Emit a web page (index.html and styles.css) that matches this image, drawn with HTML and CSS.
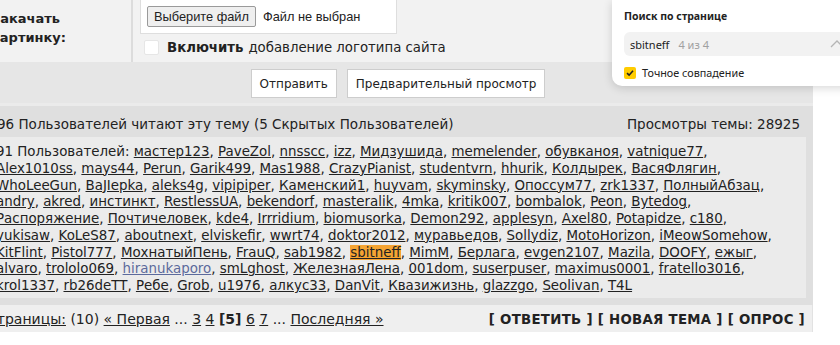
FILE: index.html
```html
<!DOCTYPE html>
<html lang="ru">
<head>
    <meta charset="UTF-8">
    <title>Тема форума</title>
    <link rel="stylesheet" href="styles.css">
</head>
<body>
    <div class="page">
        <div class="upload-row">
            <div class="upload-label">Закачать<br>картинку:</div>
            <div class="upload-field">
                <div class="file-box">
                    <span class="file-btn">Выберите файл</span>
                    <span class="file-name">Файл не выбран</span>
                </div>
                <div class="logo-opt"><span class="check"></span><b>Включить</b> добавление логотипа сайта</div>
            </div>
        </div>
        <div class="submit-row">
            <button class="btn">Отправить</button>
            <button class="btn">Предварительный просмотр</button>
        </div>
        <div class="readers">
            <div class="readers-head">
                <span>96 Пользователей читают эту тему (5 Скрытых Пользователей)</span>
                <span>Просмотры темы: 28925</span>
            </div>
            <div class="readers-list">
                91 Пользователей: <a href="#">мастер123</a>, <a href="#">PaveZol</a>, <a href="#">nnsscc</a>, <a href="#">izz</a>, <a href="#">Мидзушида</a>, <a href="#">memelender</a>, <a href="#">обувканоя</a>, <a href="#">vatnique77</a>,<br>
                <a href="#">Alex1010ss</a>, <a href="#">mays44</a>, <a href="#">Perun</a>, <a href="#">Garik499</a>, <a href="#">Mas1988</a>, <a href="#">CrazyPianist</a>, <a href="#">studentvrn</a>, <a href="#">hhurik</a>, <a href="#">Колдырек</a>, <a href="#">ВасяФлягин</a>,<br>
                <a href="#">WhoLeeGun</a>, <a href="#">BaJIepka</a>, <a href="#">aleks4g</a>, <a href="#">vipipiper</a>, <a href="#">Каменский1</a>, <a href="#">huyvam</a>, <a href="#">skyminsky</a>, <a href="#">Опоссум77</a>, <a href="#">zrk1337</a>, <a href="#">ПолныйАбзац</a>,<br>
                <a href="#">andry</a>, <a href="#">akred</a>, <a href="#">инстинкт</a>, <a href="#">RestlessUA</a>, <a href="#">bekendorf</a>, <a href="#">masteralik</a>, <a href="#">4mka</a>, <a href="#">kritik007</a>, <a href="#">bombalok</a>, <a href="#">Peon</a>, <a href="#">Bytedog</a>,<br>
                <a href="#">Распоряжение</a>, <a href="#">Почтичеловек</a>, <a href="#">kde4</a>, <a href="#">Irrridium</a>, <a href="#">biomusorka</a>, <a href="#">Demon292</a>, <a href="#">applesyn</a>, <a href="#">Axel80</a>, <a href="#">Potapidze</a>, <a href="#">c180</a>,<br>
                <a href="#">yukisaw</a>, <a href="#">KoLeS87</a>, <a href="#">aboutnext</a>, <a href="#">elviskefir</a>, <a href="#">wwrt74</a>, <a href="#">doktor2012</a>, <a href="#">муравьедов</a>, <a href="#">Sollydiz</a>, <a href="#">MotoHorizon</a>, <a href="#">iMeowSomehow</a>,<br>
                <a href="#">KitFlint</a>, <a href="#">Pistol777</a>, <a href="#">МохнатыйПень</a>, <a href="#">FrauQ</a>, <a href="#">sab1982</a>, <a href="#"><mark class="hit">sbitneff</mark></a>, <a href="#">MimM</a>, <a href="#">Берлага</a>, <a href="#">evgen2107</a>, <a href="#">Mazila</a>, <a href="#">DOOFY</a>, <a href="#">ежыг</a>,<br>
                <a href="#">alvaro</a>, <a href="#">trololo069</a>, <a href="#" class="visited">hiranukaporo</a>, <a href="#">smLghost</a>, <a href="#">ЖелезнаяЛена</a>, <a href="#">001dom</a>, <a href="#">suserpuser</a>, <a href="#">maximus0001</a>, <a href="#">fratello3016</a>,<br>
                <a href="#">krol1337</a>, <a href="#">rb26deTT</a>, <a href="#">Ребе</a>, <a href="#">Grob</a>, <a href="#">u1976</a>, <a href="#">алкус33</a>, <a href="#">DanVit</a>, <a href="#">Квазижизнь</a>, <a href="#">glazzgo</a>, <a href="#">Seolivan</a>, <a href="#">T4L</a>
            </div>
        </div>
        <div class="pager-row">
            <div class="pager"><a href="#">Страницы:</a> (10) <a href="#">« Первая</a> ... <a href="#">3</a> <a href="#">4</a> <b>[5]</b> <a href="#">6</a> <a href="#">7</a> ... <a href="#">Последняя »</a></div>
            <div class="actions">[ ОТВЕТИТЬ ] [ НОВАЯ ТЕМА ] [ ОПРОС ]</div>
        </div>
    </div>

    <div class="findbar">
        <div class="find-title">Поиск по странице</div>
        <div class="find-input">
            <span class="find-query">sbitneff</span>
            <span class="find-count">4 из 4</span>
            <svg class="find-up" width="14" height="8" viewBox="0 0 14 8"><path d="M1 7 L7 1 L13 7" fill="none" stroke="#b5b5b5" stroke-width="1.3"/></svg>
        </div>
        <div class="find-opt">
            <span class="find-check"><svg width="12" height="12" viewBox="0 0 12 12"><path d="M3 6.2 L5.1 8.2 L9 3.8" fill="none" stroke="#222" stroke-width="1.6"/></svg></span>
            Точное совпадение
        </div>
    </div>
</body>
</html>
```

FILE: styles.css
```css
body {
    margin: 0;
    background-color: white;
    font-family: "DejaVu Sans", Verdana, sans-serif;
    font-size: 13px;
    color: #222;
    overflow: hidden;
}
.page {
    width: 830px;
    margin-left: -17px;
}
a {
    color: #222;
}
/* форма загрузки */
.upload-row {
    display: flex;
    height: 62px;
    background-color: #f2f2f2;
}
.upload-label {
    width: 140px;
    padding: 9px 0 0 8px;
    font-weight: bold;
    font-size: 13px;
    line-height: 19px;
    border-right: 2px solid #dcdcdc;
}
.upload-field {
    padding-left: 7px;
}
.file-box {
    display: flex;
    align-items: center;
    width: 249px;
    height: 33px;
    padding-left: 6px;
    background-color: white;
    border: 1px solid #dedede;
    border-top: none;
    font-family: "Liberation Sans", Arial, sans-serif;
    font-size: 12.8px;
}
.file-btn {
    padding: 2px 6px;
    background-color: #efefef;
    border: 1px solid #9a9a9a;
    border-radius: 2px;
    color: #222;
}
.file-name {
    margin-left: 7px;
}
.logo-opt {
    display: flex;
    align-items: center;
    margin-top: 6px;
    font-size: 13.3px;
}
.logo-opt b {
    margin-right: 5px;
}
.check {
    width: 13px;
    height: 13px;
    margin: 0 8px 0 4px;
    background-color: white;
    border: 1px solid #e6e6e6;
    border-radius: 2px;
}
.submit-row {
    display: flex;
    justify-content: center;
    gap: 10px;
    height: 41px;
    padding-top: 7px;
    box-sizing: border-box;
    background-color: #e6e6e6;
}
.btn {
    height: 29px;
    padding: 0 8px;
    background-color: white;
    border: 1px solid #cdcdcd;
    font-family: "DejaVu Sans", Verdana, sans-serif;
    font-size: 12px;
    color: #222;
}
/* кто читает тему */
.readers {
    padding: 0 7px 7px 7px;
    background-color: #dfdfdf;
    border-top: 3px solid #ebebeb;
}
.readers-head {
    display: flex;
    justify-content: space-between;
    padding: 10px 6px 4px 7px;
    font-size: 13.5px;
    line-height: 17px;
}
.readers-list {
    padding: 7px 6px 3px 6px;
    background-color: #ebebeb;
    font-size: 13.4px;
    line-height: 16.75px;
    white-space: nowrap;
}
.hit {
    background-color: #f5a433;
    color: #222;
}
.visited {
    color: #5c6a9c;
}
.pager-row {
    display: flex;
    justify-content: space-between;
    padding: 6px 7px 4px 4px;
    line-height: 17px;
    background-color: #efefef;
    border-right: 1px solid #e2e2e2;
}
.pager {
    font-size: 14px;
}
.actions {
    font-weight: bold;
    font-size: 13.3px;
    letter-spacing: 0.3px;
}
/* панель поиска браузера */
.findbar {
    position: absolute;
    top: 0;
    left: 612px;
    width: 240px;
    height: 86px;
    padding: 9px 0 0 12px;
    box-sizing: border-box;
    background-color: white;
    border-bottom-left-radius: 10px;
    box-shadow: 0 2px 10px rgba(0, 0, 0, 0.16);
    font-family: "Noto Sans", Arial, sans-serif;
    font-size: 10.8px;
    color: #222;
    white-space: nowrap;
}
.find-title {
    font-weight: bold;
    font-size: 10.5px;
    line-height: 14px;
}
.find-input {
    display: flex;
    align-items: center;
    height: 24px;
    margin-top: 9px;
    padding-left: 6px;
    background-color: #f2f2f2;
    border-radius: 6px;
    font-size: 11px;
}
.find-count {
    margin-left: 9px;
    color: #a0a0a0;
}
.find-up {
    margin-left: auto;
    margin-right: 8px;
}
.find-opt {
    display: flex;
    align-items: center;
    margin-top: 9px;
}
.find-check {
    display: flex;
    width: 12px;
    height: 12px;
    margin-right: 6px;
    background-color: #ffcc00;
    border-radius: 2px;
}
```
